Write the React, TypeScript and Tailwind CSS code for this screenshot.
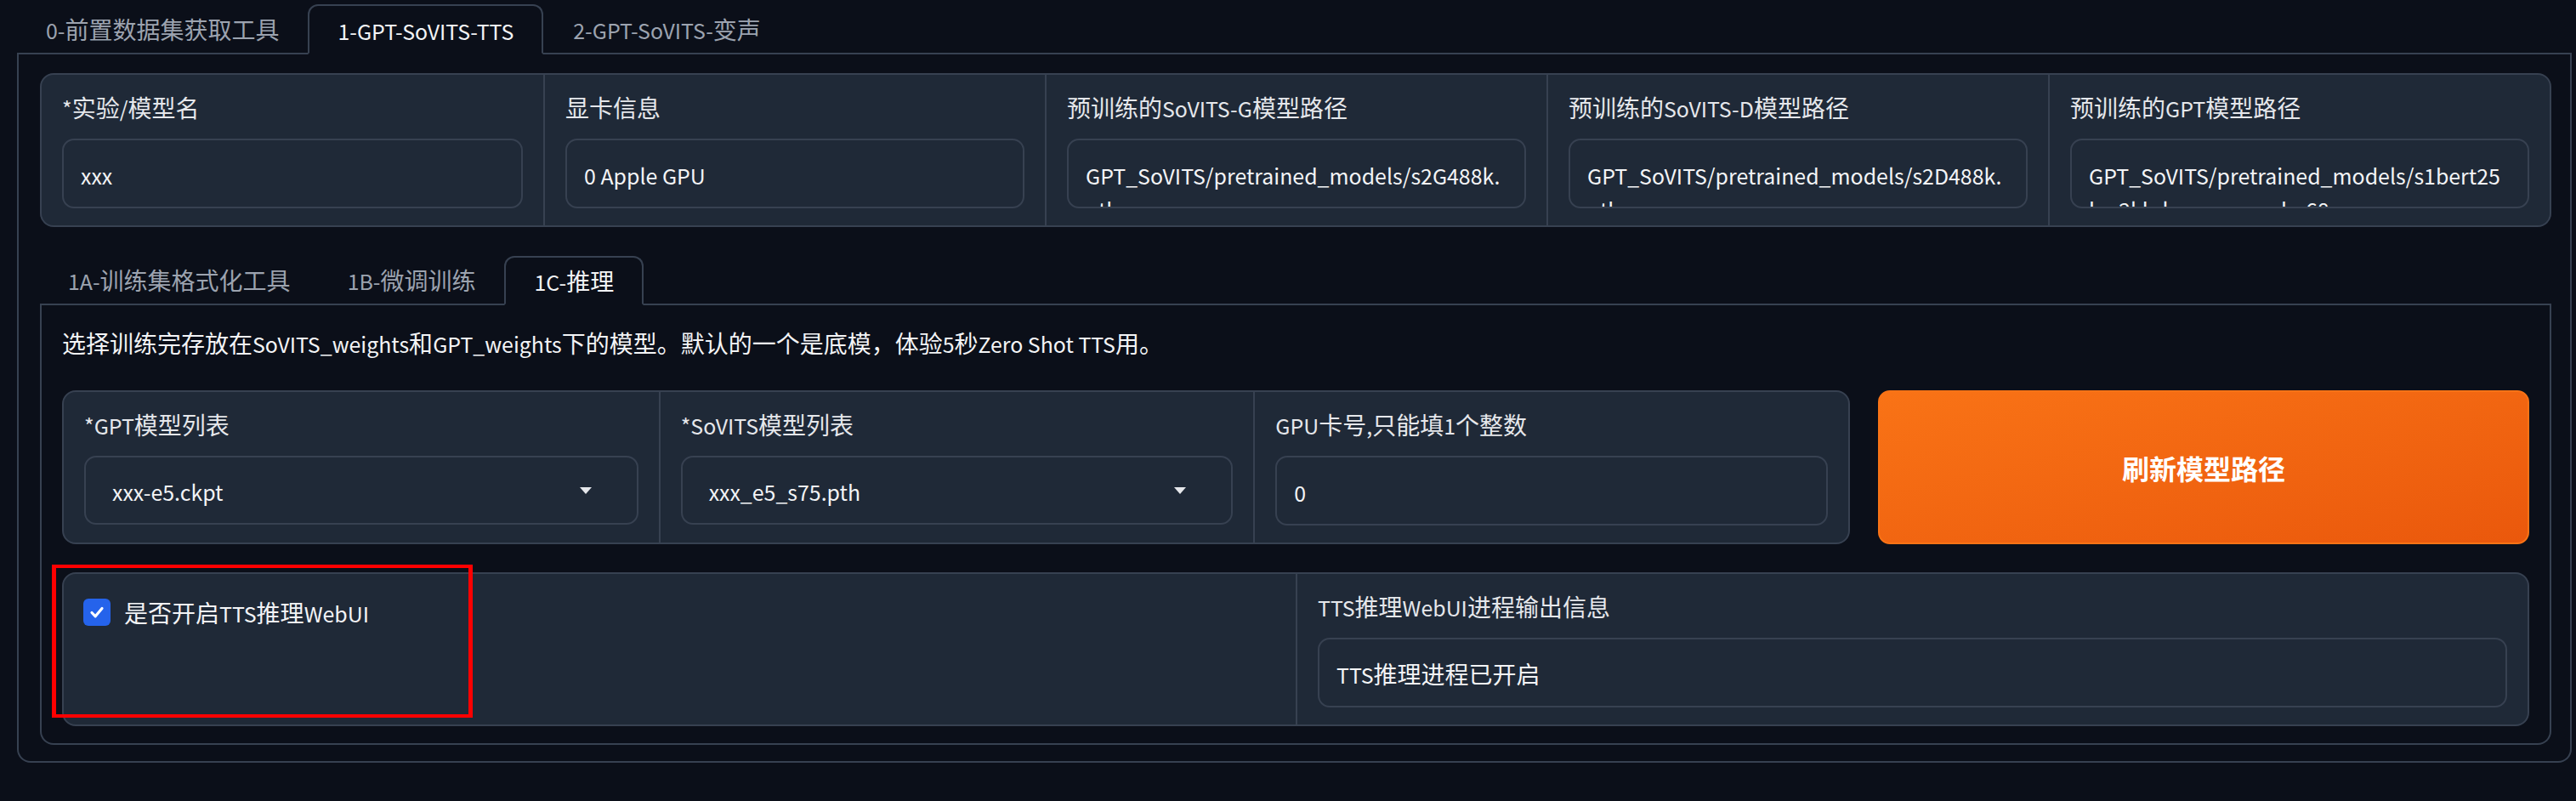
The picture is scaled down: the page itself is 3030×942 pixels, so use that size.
import React from "react";

const CJK = /([\u3000-\u303f\u4e00-\u9fff\uff00-\uffef]+)/;

const Tx = ({ s }: { s: string }) => (
  <>
    {s.split(CJK).map((p, i) =>
      p === "" ? null : CJK.test(p) ? (
        <span key={i}>{p}</span>
      ) : (
        <span key={i} className="text-[0.89em] leading-none">
          {p}
        </span>
      )
    )}
  </>
);

const Label = ({ s }: { s: string }) => (
  <div className="text-[28px] leading-[40px] text-[#e5e7eb] whitespace-nowrap">
    <Tx s={s} />
  </div>
);

const TextBox = ({ lines }: { lines: string[] }) => (
  <div className="mt-[17px] h-[82px] rounded-[14px] border-2 border-[#374151] bg-[#1f2937] px-[20px] pt-[20px] overflow-hidden">
    {lines.map((l, i) => (
      <div key={i} className="text-[28px] leading-[40px] text-[#f3f4f6] whitespace-nowrap">
        <Tx s={l} />
      </div>
    ))}
  </div>
);

const Select = ({ value }: { value: string }) => (
  <div className="mt-[17px] h-[81px] rounded-[14px] border-2 border-[#374151] bg-[#1f2937] pl-[31px] pr-[52px] flex items-center justify-between">
    <span className="text-[28px] leading-[40px] text-[#f3f4f6] whitespace-nowrap">
      <Tx s={value} />
    </span>
    <svg width="16" height="10" viewBox="0 0 16 10">
      <path d="M1 1 L15 1 L8 9 Z" fill="#e5e7eb" />
    </svg>
  </div>
);

const topCols = [
  { label: "*实验/模型名", lines: ["xxx"] },
  { label: "显卡信息", lines: ["0 Apple GPU"] },
  { label: "预训练的SoVITS-G模型路径", lines: ["GPT_SoVITS/pretrained_models/s2G488k.", "pth"] },
  { label: "预训练的SoVITS-D模型路径", lines: ["GPT_SoVITS/pretrained_models/s2D488k.", "pth"] },
  {
    label: "预训练的GPT模型路径",
    lines: ["GPT_SoVITS/pretrained_models/s1bert25", "hz-2kh-longer-epoch=68e-", "step=50232.ckpt"],
  },
];

export default function App() {
  return (
    <div className="relative w-[3030px] h-[942px] bg-[#0b0f19] font-['Noto_Sans_CJK_SC',sans-serif] overflow-hidden">
      <div className="ml-[20px] w-[3005px] pt-[5px]">
        {/* top tabs */}
        <div className="flex h-[59px]">
          <div className="flex items-center px-[34px] border-b-2 border-[#374151] text-[28px] leading-[40px] text-[#9ca3af] whitespace-nowrap">
            <span>
              <Tx s="0-前置数据集获取工具" />
            </span>
          </div>
          <div className="flex items-center px-[33px] border-2 border-[#374151] border-b-transparent rounded-t-[12px] text-[28px] leading-[40px] text-[#f3f4f6] whitespace-nowrap">
            <span>
              <Tx s="1-GPT-SoVITS-TTS" />
            </span>
          </div>
          <div className="flex items-center px-[35px] border-b-2 border-[#374151] text-[28px] leading-[40px] text-[#9ca3af] whitespace-nowrap">
            <span>
              <Tx s="2-GPT-SoVITS-变声" />
            </span>
          </div>
          <div className="flex-1 border-b-2 border-[#374151]" />
        </div>

        {/* outer panel */}
        <div className="border-2 border-t-0 border-[#374151] rounded-b-[16px] pt-[22px] pl-[25px] pr-[22px] pb-[19px]">
          {/* row 1 */}
          <div className="grid grid-cols-5 rounded-[16px] border-2 border-[#374151] bg-[#1f2937]">
            {topCols.map((c, i) => (
              <div
                key={i}
                className={
                  i === 0
                    ? "px-[24px] pt-[18px] pb-[20px] min-w-0"
                    : "border-l-2 border-[#374151] px-[24px] pt-[18px] pb-[20px] min-w-0"
                }
              >
                <Label s={c.label} />
                <TextBox lines={c.lines} />
              </div>
            ))}
          </div>

          {/* sub tabs */}
          <div className="mt-[34px] flex h-[58px]">
            <div className="flex items-center px-[33px] border-b-2 border-[#374151] text-[28px] leading-[40px] text-[#9ca3af] whitespace-nowrap">
              <span>
                <Tx s="1A-训练集格式化工具" />
              </span>
            </div>
            <div className="flex items-center px-[34px] border-b-2 border-[#374151] text-[28px] leading-[40px] text-[#9ca3af] whitespace-nowrap">
              <span>
                <Tx s="1B-微调训练" />
              </span>
            </div>
            <div className="flex items-center px-[33px] border-2 border-[#374151] border-b-transparent rounded-t-[12px] text-[28px] leading-[40px] text-[#f3f4f6] whitespace-nowrap">
              <span>
                <Tx s="1C-推理" />
              </span>
            </div>
            <div className="flex-1 border-b-2 border-[#374151]" />
          </div>

          {/* sub panel */}
          <div className="border-2 border-t-0 border-[#374151] rounded-b-[16px] px-[24px] pt-[24px] pb-[20px]">
            <div className="text-[28px] leading-[40px] text-[#f3f4f6] whitespace-nowrap">
              <Tx s="选择训练完存放在SoVITS_weights和GPT_weights下的模型。默认的一个是底模，体验5秒Zero Shot TTS用。" />
            </div>

            {/* row 3 */}
            <div className="mt-[36px] flex gap-[33px]">
              <div className="flex-1 grid grid-cols-3 rounded-[16px] border-2 border-[#374151] bg-[#1f2937]">
                <div className="px-[24px] pt-[18px] pb-[20px] min-w-0">
                  <Label s="*GPT模型列表" />
                  <Select value="xxx-e5.ckpt" />
                </div>
                <div className="border-l-2 border-[#374151] px-[24px] pt-[18px] pb-[20px] min-w-0">
                  <Label s="*SoVITS模型列表" />
                  <Select value="xxx_e5_s75.pth" />
                </div>
                <div className="border-l-2 border-[#374151] px-[24px] pt-[18px] pb-[20px] min-w-0">
                  <Label s="GPU卡号,只能填1个整数" />
                  <TextBox lines={["0"]} />
                </div>
              </div>
              <div className="w-[766px] rounded-[14px] border-2 border-[#f97316] bg-gradient-to-br from-[#f97316] to-[#ea580c] flex items-center justify-center">
                <span className="text-[32px] font-bold text-white whitespace-nowrap">刷新模型路径</span>
              </div>
            </div>

            {/* row 4 */}
            <div className="mt-[33px] grid grid-cols-2 rounded-[16px] border-2 border-[#374151] bg-[#1f2937]">
              <div className="pl-[23px] pt-[25px]">
                <div className="flex items-center gap-[16px]">
                  <div className="w-[32px] h-[32px] rounded-[6px] bg-[#2563eb] flex items-center justify-center">
                    <svg width="20" height="20" viewBox="0 0 20 20">
                      <path
                        d="M4 10.5 L8.2 14.8 L16 5.5"
                        fill="none"
                        stroke="white"
                        strokeWidth="3.2"
                        strokeLinecap="round"
                        strokeLinejoin="round"
                      />
                    </svg>
                  </div>
                  <span className="text-[28px] leading-[40px] text-[#f3f4f6] whitespace-nowrap">
                    <Tx s="是否开启TTS推理WebUI" />
                  </span>
                </div>
              </div>
              <div className="border-l-2 border-[#374151] px-[24px] pt-[18px] pb-[20px] min-w-0">
                <Label s="TTS推理WebUI进程输出信息" />
                <TextBox lines={["TTS推理进程已开启"]} />
              </div>
            </div>
          </div>
        </div>
      </div>

      {/* red annotation box */}
      <div className="absolute left-[61px] top-[664px] w-[495px] h-[180px] border-y-[4px] border-x-[5px] border-[#ff0000] pointer-events-none" />
    </div>
  );
}
